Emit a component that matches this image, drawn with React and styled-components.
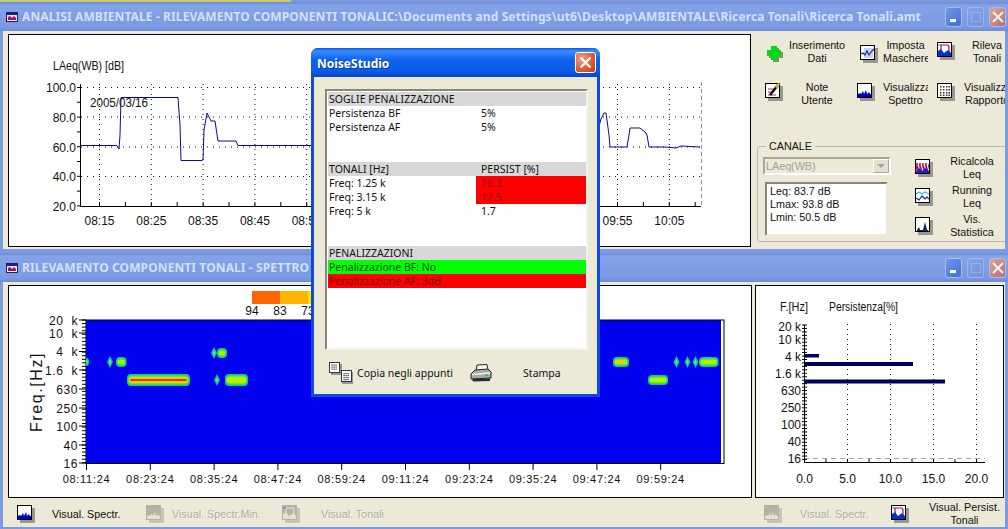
import React from 'react'
import styled, { createGlobalStyle } from 'styled-components'

const Global = createGlobalStyle`
	html, body {
		margin: 0;
		padding: 0;
		background: #ece9d8;
		overflow: hidden;
	}
`

const UI_FONT = `'Liberation Sans', Arial, sans-serif`

const Screen = styled.div`
	width: 1008px;
	height: 529px;
	position: relative;
	overflow: hidden;
	display: flex;
	flex-direction: column;
	background: #ece9d8;
	font-family: ${UI_FONT};
	font-size: 10.75px;
	color: #111;
`

const TopStrip = styled.div`
	height: 2px;
	background: linear-gradient(90deg, #c8cf6a 0, #c8cf6a 290px, #7d98dc 292px);
`

const Window = styled.section`
	height: ${p => p.$h}px;
	flex: none;
	display: flex;
	flex-direction: column;
	box-sizing: border-box;
	border-left: 3px solid #7f9be0;
	border-right: 3px solid #7f9be0;
	border-bottom: ${p => p.$foot}px solid #7f9be0;
	background: #ece9d8;
`

const TitleBar = styled.header`
	height: 29px;
	flex: none;
	margin: 0 -3px;
	padding: 0 2px 0 6px;
	display: flex;
	align-items: center;
	background: linear-gradient(180deg, #6d8bd8 0, #85a3e8 12%, #7f9de6 55%, #7b9ae2 85%, #6c8cd8 100%);
`

const TitleText = styled.span`
	flex: 1;
	margin-left: 4px;
	font-family: 'Noto Sans', sans-serif;
	font-weight: 700;
	font-size: 12px;
	letter-spacing: 0.11px;
	white-space: nowrap;
	overflow: hidden;
	color: #d3e0f8;
`

const AppGlyph = styled.svg`
	width: 12px;
	height: 12px;
	flex: none;
`

const CaptionGroup = styled.div`
	display: flex;
	gap: 5px;
`

const CaptionButton = styled.div`
	width: 17px;
	height: 20px;
	border-radius: 3px;
	border: 1px solid #a9bdec;
	box-sizing: border-box;
	display: flex;
	align-items: center;
	justify-content: center;
	background: ${p =>
		p.$kind === 'close'
			? 'linear-gradient(135deg, #d9a4a0, #b8706e)'
			: p.$kind === 'min'
			? 'linear-gradient(135deg, #6f9ae8, #3f6fd4)'
			: 'linear-gradient(135deg, #86a3e6, #7290dc)'};
	opacity: ${p => (p.$kind === 'max' ? 0.75 : 1)};
`

const Panel = styled.div`
	flex: none;
	width: ${p => p.$w}px;
	height: 213px;
	margin-left: ${p => p.$ml || 0}px;
	box-sizing: border-box;
	border: 1px solid #000;
	background: #fff;
	svg {
		display: block;
	}
	svg text {
		font-family: ${UI_FONT};
		fill: #111;
	}
`

const PlotRow = styled.div`
	display: flex;
	flex: none;
	padding: 3px 0 0 5px;
`

const TopBody = styled(PlotRow)`
	flex: 1;
	min-height: 0;
`

const SideColumn = styled.aside`
	flex: none;
	width: 254px;
	overflow: hidden;
	display: flex;
	flex-direction: column;
`

const ToolGrid = styled.div`
	display: grid;
	grid-template-columns: 100px 77px 77px;
	grid-auto-rows: 42px;
	margin-top: 5px;
`

const Tool = styled.div`
	display: flex;
	align-items: flex-start;
`

const ToolIconSlot = styled.div`
	flex: none;
	box-sizing: border-box;
	width: ${p => p.$w}px;
	padding: ${p => p.$top}px 0 0 ${p => p.$left}px;
	display: flex;
`

const ToolLabel = styled.div`
	flex: none;
	width: ${p => p.$w}px;
	margin-left: ${p => p.$ml || 0}px;
	text-align: center;
	line-height: 13px;
	white-space: nowrap;
	overflow: ${p => (p.$clip ? 'hidden' : 'visible')};
`

const ChannelGroup = styled.fieldset`
	margin: 17px -4px 0 6px;
	padding: 4px 0 0 5px;
	height: 102px;
	box-sizing: border-box;
	border: 1px solid #bdbaa8;
	border-radius: 3px;
	display: flex;
	gap: 24px;
	legend {
		margin-left: 3px;
		padding: 0 3px;
		line-height: 13px;
	}
`

const ChannelLeft = styled.div`
	width: 128px;
	flex: none;
	display: flex;
	flex-direction: column;
	gap: 7px;
`

const Combo = styled.div`
	height: 18px;
	box-sizing: border-box;
	border: 2px solid #aca899;
	border-right-color: #fff;
	border-bottom-color: #fff;
	padding-left: 1px;
	display: flex;
	align-items: center;
	justify-content: space-between;
	color: #a5a294;
	background: #ece9d8;
`

const ComboArrow = styled.div`
	width: 16px;
	height: 14px;
	background: #e4e1d0;
	border: 1px solid #fff;
	border-right-color: #aca899;
	border-bottom-color: #aca899;
	box-sizing: border-box;
	display: flex;
	align-items: center;
	justify-content: center;
	&:after {
		content: '';
		border-left: 4px solid transparent;
		border-right: 4px solid transparent;
		border-top: 4px solid #a5a294;
	}
`

const Readout = styled.div`
	width: 123px;
	height: 54px;
	margin-left: 2px;
	box-sizing: border-box;
	border: 2px solid #8a877a;
	border-right-color: #ece9d8;
	border-bottom-color: #ece9d8;
	background: #fff;
	padding: 1px 0 0 3px;
	line-height: 13px;
`

const ChannelTools = styled.div`
	flex: 1;
	margin-top: -4px;
	display: flex;
	flex-direction: column;
`

const ChannelTool = styled.div`
	height: 29px;
	display: flex;
	align-items: center;
`

const ActionRow = styled.div`
	flex: 1;
	display: flex;
	align-items: center;
	padding: 3px 0 0 4px;
`

const Action = styled.div`
	flex: none;
	width: ${p => p.$w}px;
	display: flex;
	align-items: center;
	white-space: nowrap;
	color: ${p => (p.$off ? '#b0ad9f' : '#111')};
	text-shadow: ${p => (p.$off ? '1px 1px 0 #f7f6ee' : 'none')};
`

const ActionIcon = styled.div`
	flex: none;
	width: ${p => p.$w}px;
	margin-right: ${p => p.$gap || 0}px;
	display: flex;
	justify-content: center;
`

const TwoLine = styled.div`
	text-align: center;
	line-height: 13px;
	margin-left: ${p => p.$ml || 0}px;
`

/* the floating message box */
const Dialog = styled.div`
	position: absolute;
	left: 311px;
	top: 48px;
	width: 289px;
	height: 349px;
	box-sizing: border-box;
	border-radius: 7px 7px 0 0;
	border: 3px solid #0a4de0;
	border-top: 0;
	background: #ece9d8;
	display: flex;
	flex-direction: column;
	font-family: 'Noto Sans', sans-serif;
	font-size: 10.5px;
`

const DialogTitle = styled.div`
	height: 29px;
	margin: 0 -3px;
	padding: 0 4px 0 6px;
	flex: none;
	display: flex;
	align-items: center;
	justify-content: space-between;
	border-radius: 7px 7px 0 0;
	background: linear-gradient(180deg, #0a56e8 0, #3a8cfb 10%, #0f62ee 40%, #0a5be8 80%, #0747c8 100%);
	color: #fff;
	font-weight: 700;
	font-size: 12px;
	text-shadow: 1px 1px 0 #0a3aa0;
`

const DialogTitleText = styled.span`
	padding-top: 2px;
`

const DialogClose = styled.div`
	width: 21px;
	height: 21px;
	box-sizing: border-box;
	border: 1px solid #fff;
	border-radius: 3px;
	background: radial-gradient(circle at 30% 30%, #f0a080, #d94f20 70%, #c03a18);
	display: flex;
	align-items: center;
	justify-content: center;
`

const ReportFrame = styled.div`
	margin: 12px 0 0 11px;
	width: 263px;
	height: 261px;
	box-sizing: border-box;
	border: 2px solid #8a877a;
	border-right-color: #f4f3ea;
	border-bottom-color: #f4f3ea;
	background: #fff;
	padding: 1px 0 0 1px;
`

const ReportRow = styled.div`
	height: 14px;
	width: 258px;
	display: flex;
	line-height: 14px;
	background: ${p => p.$bg || 'transparent'};
	white-space: nowrap;
`

const ReportCell = styled.div`
	width: ${p => p.$w}px;
	flex: none;
	padding-left: ${p => p.$pad || 1}px;
	box-sizing: border-box;
	background: ${p => p.$bg || 'transparent'};
	color: ${p => p.$color || '#111'};
`

const DialogFooter = styled.div`
	flex: 1;
	display: flex;
	align-items: center;
	padding: 2px 0 0 15px;
`

const FooterItem = styled.span`
	display: flex;
	margin-left: ${p => p.$ml}px;
	white-space: nowrap;
`

const BlobLayer = styled.g`
	filter: blur(0.5px);
`

/* ---------- icons ---------- */

const IconFrame = ({ off, children }) => (
	<svg width="18" height="18" viewBox="0 0 18 18">
		<rect x="3" y="3" width="15" height="15" fill={off ? '#c8c5b6' : '#9a988c'} />
		<rect x="0.5" y="0.5" width="14" height="14" fill={off ? '#b5b2a4' : '#fff'} stroke={off ? '#b5b2a4' : '#000'} />
		{children}
	</svg>
)

const SpectrumIcon = ({ off }) => (
	<IconFrame off={off}>
		<path
			d="M1 14 L1 11 L3 10 L4 11 L6 8 L7 11 L9 7 L10 11 L12 9 L13 11 L14 11 L14 14 Z"
			fill={off ? '#e4e1d0' : '#0000c8'}
		/>
	</IconFrame>
)

const TonalIcon = ({ off }) => (
	<IconFrame off={off}>
		<path d="M1 9 L4 7 L7 11 L11 8 L14 11 L14 14 L1 14 Z" fill={off ? '#e4e1d0' : '#0033cc'} />
		<path d="M4 8 L4 3 L11 3 L12 5 L12 10" fill="none" stroke={off ? '#e4e1d0' : '#c00040'} strokeWidth="1.2" />
		<path d="M1 3 L4 3" stroke="#00a0c0" />
	</IconFrame>
)

const MaskIcon = () => (
	<IconFrame>
		<rect x="4" y="3" width="9" height="10" fill="#c8d4e8" />
		<path d="M1 9 L3 8 L5 10 L7 6 L9 10 L11 7 L14 4" fill="none" stroke="#1020a0" strokeWidth="1.1" />
	</IconFrame>
)

const ReportIcon = () => (
	<IconFrame>
		{[3, 6, 9, 11.5].map(y =>
			[3, 6, 9, 11.5].map(x => <rect key={`${x}-${y}`} x={x} y={y} width="1.5" height="1.5" fill="#333" />)
		)}
	</IconFrame>
)

const NoteIcon = () => (
	<IconFrame>
		<path d="M3 6 L9 6 M3 9 L7 9 M3 12 L11 12" stroke="#a03060" />
		<path d="M5 12 L13 2" stroke="#111" strokeWidth="2.4" />
		<path d="M11 4.5 L14 0.5" stroke="#f0d000" strokeWidth="2" />
	</IconFrame>
)

const PlusIcon = () => (
	<svg width="18" height="18" viewBox="0 0 18 18">
		<path d="M7 3 H13 V7 H17 V13 H13 V17 H7 V13 H3 V7 H7 Z" fill="#7a9a60" />
		<path d="M5 1 H11 V5 H15 V11 H11 V15 H5 V11 H1 V5 H5 Z" fill="#00d81c" />
	</svg>
)

const RecalcIcon = () => (
	<IconFrame>
		<path d="M1 13 L2 4 L3 13 L5 4 L6 13 L8 4 L9 13 L11 4 L12 13 L14 5" fill="none" stroke="#a01060" />
		<path d="M1 13 L4 9 L7 12 L10 9 L14 12 L14 14 L1 14 Z" fill="#2020c0" />
	</IconFrame>
)

const RunningIcon = () => (
	<IconFrame>
		<path d="M1 6 L4 4 L7 6 L10 4 L14 6" fill="none" stroke="#30c8d8" strokeWidth="1.2" />
		<path d="M1 10 L4 12 L7 8 L10 11 L12 9 L14 11" fill="none" stroke="#1030a0" strokeWidth="1.2" />
	</IconFrame>
)

const StatsIcon = () => (
	<IconFrame>
		<path d="M2 13 L4 10 L5 13 L8 13 L10 5 L12 13 L13 13 L13 14 L2 14 Z" fill="#102060" />
	</IconFrame>
)

const CopyIcon = () => (
	<svg width="24" height="22" viewBox="0 0 24 22">
		<rect x="2" y="2" width="11" height="11" fill="#9a988c" />
		<rect x="0.5" y="0.5" width="10" height="10" fill="#fff" stroke="#333" />
		<rect x="13" y="10" width="11" height="12" fill="#9a988c" />
		<rect x="12.5" y="8.5" width="10" height="11" fill="#fff" stroke="#333" />
		{[2.5, 4.5, 6.5].map(y =>
			[2.5, 4.5, 6.5].map(x => <rect key={`a${x}${y}`} x={x} y={y} width="1.2" height="1.2" fill="#333" />)
		)}
		{[11, 13, 15, 17].map(y =>
			[14.5, 16.5, 18.5].map(x => <rect key={`b${x}${y}`} x={x} y={y} width="1.2" height="1.2" fill="#333" />)
		)}
	</svg>
)

const PrinterIcon = () => (
	<svg width="22" height="18" viewBox="0 0 22 18">
		<path d="M7 1 L17 0.5 L18 6 L6 7 Z" fill="#f4f4f4" stroke="#222" />
		<path d="M1 10 L5 6 L18 5 L21 8 L21 14 L1 15 Z" fill="#a8aca8" stroke="#222" />
		<path d="M2 10.5 L20 9" stroke="#f0f2f0" strokeWidth="1.4" />
		<path d="M2 15 L20 14.5 L20 17 L3 17.5 Z" fill="#2c2c2c" />
		<rect x="15" y="10.5" width="3" height="1.5" fill="#20c040" />
	</svg>
)

const WindowGlyph = () => (
	<AppGlyph viewBox="0 0 12 12">
		<rect x="0.5" y="1.5" width="11" height="9" fill="#e8e8f4" stroke="#202060" />
		<rect x="1" y="2" width="10" height="2" fill="#202080" />
		<path d="M2 9 L2 6 L4 5 L6 7 L8 5 L10 7 L10 9 Z" fill="#a01060" />
	</AppGlyph>
)

const Caption = () => (
	<CaptionGroup>
		<CaptionButton $kind="min">
			<svg width="10" height="14" viewBox="0 0 10 14">
				<rect x="1" y="9" width="6" height="3" fill="#fff" />
			</svg>
		</CaptionButton>
		<CaptionButton $kind="max">
			<svg width="10" height="10" viewBox="0 0 10 10">
				<rect x="0.5" y="0.5" width="9" height="9" fill="none" stroke="#9db4ea" />
			</svg>
		</CaptionButton>
		<CaptionButton $kind="close">
			<svg width="12" height="12" viewBox="0 0 12 12">
				<path d="M1 1 L11 11 M11 1 L1 11" stroke="#f4eeee" strokeWidth="2.2" />
			</svg>
		</CaptionButton>
	</CaptionGroup>
)

/* ---------- charts: coordinates are page pixels via viewBox ---------- */

const range = (n, f) => Array.from({ length: n }, (_, i) => f(i))

const LEVEL_LINE =
	'81,145.5 117,145.5 119,149 120,135 121,97.5 178,97.5 180,125 181,160.5 201,160.5 203,160 204,130 207,113 211,121 215,121 218,141 236,141 238,145.5 310,145.5 ' +
	'598,130 601,119 604,113 606,113 609,135 610,147 627,147 629,135 630,128 640,128 645,132 647,135 649,147 665,147 676,148 681,146 700,147'

const LevelChart = () => {
	const rows = [
		['100.0', 87.5],
		['80.0', 117],
		['60.0', 147],
		['40.0', 176.5],
		['20.0', 206],
	]
	const cols = ['08:15', '08:25', '08:35', '08:45', '08:55', '09:05', '09:15', '09:25', '09:35', '09:45', '09:55', '10:05']
	const colX = i => 99.5 + i * 51.8
	return (
		<svg width="741" height="211" viewBox="9 35 741 211">
			<text x="53" y="70" fontSize="12" textLength="71" lengthAdjust="spacingAndGlyphs">LAeq(WB) [dB]</text>
			{rows.slice(0, 4).map(([, y]) => (
				<line key={y} x1="81" x2="701" y1={y} y2={y} stroke="#111" strokeDasharray="1 5" />
			))}
			{cols.map((c, i) => (
				<line key={c} x1={colX(i)} x2={colX(i)} y1="84" y2="206" stroke="#111" strokeDasharray="1 4" />
			))}
			<line x1="701.5" x2="701.5" y1="82" y2="206" stroke="#c080a0" strokeDasharray="4 3" />
			<polyline points={LEVEL_LINE} fill="none" stroke="#0a0a90" strokeWidth="1" />
			<text x="90" y="107" fontSize="12" textLength="58" lengthAdjust="spacingAndGlyphs">2005/03/16</text>
			<line x1="80.5" x2="80.5" y1="84" y2="206.5" stroke="#000" />
			<line x1="80" x2="701" y1="206.5" y2="206.5" stroke="#000" />
			{range(9, i => 87.5 + i * 14.8).map(y => (
				<line key={y} x1="77" x2="81" y1={y} y2={y} stroke="#000" />
			))}
			{range(24, i => 99.5 + i * 25.9).map(x => (
				<line key={x} x1={x} x2={x} y1="202" y2="206" stroke="#000" />
			))}
			{rows.map(([t, y]) => (
				<text key={t} x="76" y={y + 4.5} fontSize="12" textAnchor="end">{t}</text>
			))}
			{cols.map((c, i) => (
				<text key={c} x={colX(i)} y="225" fontSize="12" textAnchor="middle">{c}</text>
			))}
		</svg>
	)
}

const Blob = ({ x1, x2, y, h = 12, heat = 2 }) => {
	const w = x2 - x1
	const layers = [
		['#00c8a8', h],
		['#20e840', h - 2],
		['#b8f000', h - 5],
		heat > 0 && ['#ffc000', h - 7],
		heat > 1 && ['#e03000', 2],
	].filter(Boolean)
	return (
		<BlobLayer>
			{layers.map(([fill, lh], i) => (
				<rect
					key={fill}
					x={x1 + i * 0.8}
					y={y - lh / 2}
					width={w - i * 1.6}
					height={lh}
					rx={Math.min(lh / 2, 4)}
					fill={fill}
				/>
			))}
		</BlobLayer>
	)
}

const Diamond = ({ x, y }) => (
	<BlobLayer>
		<path d={`M${x} ${y - 6} L${x + 3} ${y} L${x} ${y + 6} L${x - 3} ${y} Z`} fill="#00c8a8" />
		<path d={`M${x} ${y - 3} L${x + 1.4} ${y} L${x} ${y + 3} L${x - 1.4} ${y} Z`} fill="#70f020" />
	</BlobLayer>
)

const SpectrumChart = () => {
	const freq = [
		['20  k', 320],
		['10  k', 333],
		['4  k', 351.5],
		['1.6  k', 370],
		['630', 389],
		['250', 408],
		['100', 426],
		['40', 445],
		['16', 463],
	]
	const times = ['08:11:24', '08:23:24', '08:35:24', '08:47:24', '08:59:24', '09:11:24', '09:23:24', '09:35:24', '09:47:24', '09:59:24']
	const timeX = i => 85.5 + i * 63.8
	return (
		<svg width="742" height="211" viewBox="8 286 742 211">
			<rect x="251" y="291" width="28" height="13" fill="#ff6600" />
			<rect x="279" y="291" width="28" height="13" fill="#ffb400" />
			<rect x="307" y="291" width="28" height="13" fill="#ffe000" />
			<text x="251" y="315" fontSize="12" textAnchor="middle">94</text>
			<text x="279" y="315" fontSize="12" textAnchor="middle">83</text>
			<text x="307" y="315" fontSize="12" textAnchor="middle">73</text>

			<rect x="85" y="320" width="638" height="143.5" fill="#fff" stroke="#000" />
			<rect x="85" y="320" width="635" height="143" fill="#0000ee" />
			<rect x="85" y="320" width="635" height="1.5" fill="#000090" />

			<Blob x1={84} x2={88} y={362} h={8} heat={0} />
			<Diamond x={109} y={362} />
			<Blob x1={115} x2={125.5} y={362} h={10} heat={0} />
			<Blob x1={126} x2={189} y={380} h={12} heat={2} />
			<Diamond x={213} y={353} />
			<Blob x1={216} x2={226} y={353} h={10} heat={0} />
			<Diamond x={216} y={380} />
			<Blob x1={224} x2={247} y={380} h={12} heat={0} />
			<Blob x1={612} x2={628} y={362} h={10} heat={1} />
			<Blob x1={647} x2={667} y={380} h={10} heat={0} />
			<Diamond x={675.5} y={362} />
			<Diamond x={686.5} y={362} />
			<Diamond x={694.5} y={362} />
			<Blob x1={698} x2={717.5} y={362} h={10} heat={0} />

			{range(41, i => 320 + i * 3.57).map(y => (
				<line key={y} x1="81" x2="85" y1={y} y2={y} stroke="#000" />
			))}
			{freq.map(([t, y]) => (
				<line key={t} x1="78" x2="85" y1={y} y2={y} stroke="#000" />
			))}
			{freq.map(([t, y]) => (
				<text key={t} x="77" y={y + 4.5} fontSize="12" letterSpacing="0.6" textAnchor="end" xmlSpace="preserve">{t}</text>
			))}
			{times.map((t, i) => (
				<g key={t}>
					<line x1={timeX(i)} x2={timeX(i)} y1="463" y2="470" stroke="#000" />
					<text x={timeX(i)} y="483" fontSize="11" letterSpacing="0.7" textAnchor="middle">{t}</text>
				</g>
			))}
			<text x="0" y="0" fontSize="16" letterSpacing="1.6" textAnchor="middle" transform="translate(41 392) rotate(-90)">Freq.[Hz]</text>
		</svg>
	)
}

const PersistChart = () => {
	const freq = [
		['20 k', 326],
		['10 k', 339],
		['4 k', 356],
		['1.6 k', 373],
		['630', 390],
		['250', 407],
		['100', 424],
		['40', 441],
		['16', 458],
	]
	const pct = [
		['0.0', 803.5],
		['5.0', 846.5],
		['10.0', 889.5],
		['15.0', 932.5],
		['20.0', 975.5],
	]
	return (
		<svg width="247" height="211" viewBox="755 286 247 211">
			<text x="779" y="311" fontSize="12" textLength="28" lengthAdjust="spacingAndGlyphs">F.[Hz]</text>
			<text x="828" y="311" fontSize="12" textLength="69" lengthAdjust="spacingAndGlyphs">Persistenza[%]</text>
			{pct.slice(1).map(([t, x]) => (
				<line key={t} x1={x} x2={x} y1="324" y2="462" stroke="#111" strokeDasharray="1 4" />
			))}
			<line x1="803" x2="984" y1="458.5" y2="458.5" stroke="#d090b0" strokeDasharray="5 4" />
			<rect x="803" y="354" width="15" height="3.5" fill="#000060" />
			<rect x="803" y="362" width="109" height="4" fill="#000060" />
			<rect x="803" y="379.5" width="141" height="4" fill="#000060" />
			<line x1="803.5" x2="803.5" y1="325" y2="462" stroke="#000" />
			<line x1="803" x2="984" y1="462.5" y2="462.5" stroke="#000" />
			{range(40, i => 325 + i * 3.45).map(y => (
				<line key={y} x1="801" x2="806" y1={y} y2={y} stroke="#000" />
			))}
			{range(9, i => 803.5 + i * 21.5).map(x => (
				<line key={x} x1={x} x2={x} y1="459" y2="463" stroke="#000" />
			))}
			{freq.map(([t, y]) => (
				<text key={t} x="800" y={y + 4.5} fontSize="12" textAnchor="end">{t}</text>
			))}
			{pct.map(([t, x]) => (
				<text key={t} x={x} y="483" fontSize="12" textAnchor="middle">{t}</text>
			))}
		</svg>
	)
}

/* ---------- data ---------- */

const tools = [
	{ icon: <PlusIcon />, slot: 33, left: 15, top: 6, lines: ['Inserimento', 'Dati'], labelW: 66 },
	{ icon: <MaskIcon />, slot: 32, left: 9, top: 6, lines: ['Imposta', 'Maschere'], labelW: 45, clip: true },
	{ icon: <TonalIcon />, slot: 36, left: 9, top: 3, lines: ['Rileva', 'Tonali'], labelW: 46 },
	{ icon: <NoteIcon />, slot: 33, left: 14, top: 2, lines: ['Note', 'Utente'], labelW: 66 },
	{ icon: <SpectrumIcon />, slot: 32, left: 6, top: 2, lines: ['Visualizza', 'Spettro'], labelW: 45, clip: true },
	{ icon: <ReportIcon />, slot: 36, left: 9, top: 2, lines: ['Visualizza', 'Rapporto'], labelW: 46 },
]

const channelTools = [
	{ icon: <RecalcIcon />, lines: ['Ricalcola', 'Leq'] },
	{ icon: <RunningIcon />, lines: ['Running', 'Leq'] },
	{ icon: <StatsIcon />, lines: ['Vis.', 'Statistica'] },
]

const report = [
	{ bg: '#d8d8d8', cells: ['SOGLIE PENALIZZAZIONE', ''] },
	{ cells: ['Persistenza BF', '5%'] },
	{ cells: ['Persistenza AF', '5%'] },
	{ cells: ['', ''] },
	{ cells: ['', ''] },
	{ bg: '#d8d8d8', cells: ['TONALI [Hz]', 'PERSIST [%]'] },
	{ cells: ['Freq: 1.25 k', '16.3'], alert: true },
	{ cells: ['Freq: 3.15 k', '12.5'], alert: true },
	{ cells: ['Freq: 5 k', '1.7'] },
	{ cells: ['', ''] },
	{ cells: ['', ''] },
	{ bg: '#d8d8d8', cells: ['PENALIZZAZIONI', ''] },
	{ bg: '#00ff00', cells: ['Penalizzazione BF: No', ''], color: '#0a4a0a' },
	{ bg: '#ff0000', cells: ['Penalizzazione AF: 3dB', ''], color: '#7a0000' },
]

const App = () => (
	<Screen>
		<Global />
		<TopStrip />

		<Window $h={251} $foot={4}>
			<TitleBar>
				<WindowGlyph />
				<TitleText>
					ANALISI AMBIENTALE - RILEVAMENTO COMPONENTI TONALIC:\Documents and Settings\ut6\Desktop\AMBIENTALE\Ricerca Tonali\Ricerca Tonali.amt
				</TitleText>
				<Caption />
			</TitleBar>
			<TopBody>
				<Panel $w={743}>
					<LevelChart />
				</Panel>
				<SideColumn>
					<ToolGrid>
						{tools.map(t => (
							<Tool key={t.lines[0] + t.lines[1]}>
								<ToolIconSlot $w={t.slot} $left={t.left} $top={t.top}>{t.icon}</ToolIconSlot>
								<ToolLabel $w={t.labelW} $clip={t.clip}>
									{t.lines[0]}
									<br />
									{t.lines[1]}
								</ToolLabel>
							</Tool>
						))}
					</ToolGrid>
					<ChannelGroup>
						<legend>CANALE</legend>
						<ChannelLeft>
							<Combo>
								LAeq(WB)
								<ComboArrow />
							</Combo>
							<Readout>
								Leq: 83.7 dB
								<br />
								Lmax: 93.8 dB
								<br />
								Lmin: 50.5 dB
							</Readout>
						</ChannelLeft>
						<ChannelTools>
							{channelTools.map(t => (
								<ChannelTool key={t.lines[0]}>
									<ActionIcon $w={18}>{t.icon}</ActionIcon>
									<ToolLabel $w={62} $ml={8}>
										{t.lines[0]}
										<br />
										{t.lines[1]}
									</ToolLabel>
								</ChannelTool>
							))}
						</ChannelTools>
					</ChannelGroup>
				</SideColumn>
			</TopBody>
		</Window>

		<Window $h={276} $foot={2}>
			<TitleBar>
				<WindowGlyph />
				<TitleText>RILEVAMENTO COMPONENTI TONALI - SPETTRO</TitleText>
				<Caption />
			</TitleBar>
			<PlotRow>
				<Panel $w={744}>
					<SpectrumChart />
				</Panel>
				<Panel $w={249} $ml={3}>
					<PersistChart />
				</Panel>
			</PlotRow>
			<ActionRow>
				<Action $w={134}>
					<ActionIcon $w={38} $gap={7}><SpectrumIcon /></ActionIcon>
					Visual. Spectr.
				</Action>
				<Action $w={134} $off>
					<ActionIcon $w={28} $gap={3}><SpectrumIcon off /></ActionIcon>
					Visual. Spectr.Min.
				</Action>
				<Action $w={480} $off>
					<ActionIcon $w={32} $gap={14}><TonalIcon off /></ActionIcon>
					Visual. Tonali
				</Action>
				<Action $w={130} $off>
					<ActionIcon $w={36} $gap={9}><SpectrumIcon off /></ActionIcon>
					Visual. Spectr.
				</Action>
				<Action $w={118}>
					<ActionIcon $w={30}><TonalIcon /></ActionIcon>
					<TwoLine $ml={14}>
						Visual. Persist.
						<br />
						Tonali
					</TwoLine>
				</Action>
			</ActionRow>
		</Window>

		<Dialog>
			<DialogTitle>
				<DialogTitleText>NoiseStudio</DialogTitleText>
				<DialogClose>
					<svg width="13" height="13" viewBox="0 0 13 13">
						<path d="M1.5 1.5 L11.5 11.5 M11.5 1.5 L1.5 11.5" stroke="#fff" strokeWidth="2.2" />
					</svg>
				</DialogClose>
			</DialogTitle>
			<ReportFrame>
				{report.map((r, i) => (
					<ReportRow key={i} $bg={r.bg}>
						<ReportCell $w={148} $color={r.color}>{r.cells[0]}</ReportCell>
						<ReportCell $w={110} $pad={5} $bg={r.alert ? '#ff0000' : undefined} $color={r.alert ? '#8a0000' : undefined}>
							{r.cells[1]}
						</ReportCell>
					</ReportRow>
				))}
			</ReportFrame>
			<DialogFooter>
				<CopyIcon />
				<FooterItem $ml={4}>Copia negli appunti</FooterItem>
				<FooterItem $ml={17}><PrinterIcon /></FooterItem>
				<FooterItem $ml={31}>Stampa</FooterItem>
			</DialogFooter>
		</Dialog>
	</Screen>
)

export default App
